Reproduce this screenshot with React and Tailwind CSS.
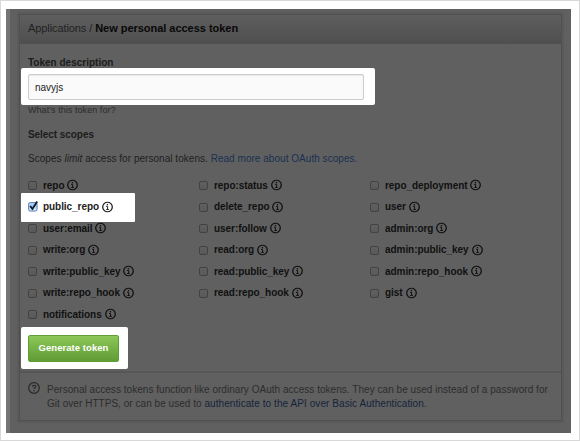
import React from "react";

const columns = [
  ["repo", "public_repo", "user:email", "write:org", "write:public_key", "write:repo_hook", "notifications"],
  ["repo:status", "delete_repo", "user:follow", "read:org", "read:public_key", "read:repo_hook"],
  ["repo_deployment", "user", "admin:org", "admin:public_key", "admin:repo_hook", "gist"],
];

function InfoIcon() {
  return (
    <svg className="ml-[3px] h-[11px] w-[11px] shrink-0 -translate-y-[0.5px]" viewBox="0 0 11 11" fill="none">
      <circle cx="5.5" cy="5.5" r="4.8" stroke="currentColor" strokeWidth="1.3" />
      <path d="M4.1 4.9h1.5v3M4.3 8h2.5" stroke="currentColor" strokeWidth="1" />
      <rect x="4.8" y="2.5" width="1.3" height="1.3" fill="currentColor" />
    </svg>
  );
}

function HelpIcon() {
  return (
    <svg className="mt-[-2px] h-3 w-3 shrink-0 text-[#292929]" viewBox="0 0 12 12" fill="none" stroke="currentColor">
      <circle cx="6" cy="6" r="5.3" strokeWidth="1.2" />
      <path d="M4.3 4.8C4.3 3.7 5 3.3 6 3.3s1.8.5 1.8 1.4C7.8 5.8 6 5.7 6 7.1" strokeWidth="1.15" />
      <path d="M6 8v1.3" strokeWidth="1.3" />
    </svg>
  );
}

function Checkbox({ checked }) {
  if (checked) {
    return (
      <svg className="h-[11px] w-[11px] shrink-0 overflow-visible" viewBox="0 0 11 11">
        <rect x="0.5" y="0.5" width="8.6" height="8.6" rx="1.7" fill="#a9cdf0" stroke="#6688b5" />
        <rect x="1.4" y="5.1" width="6.8" height="3.2" rx="1" fill="#c5e5fb" />
        <path d="M2.2 4L4.4 7L9.2 -0.4" fill="none" stroke="#10162b" strokeWidth="1.8" />
      </svg>
    );
  }
  return (
    <span className="flex h-[11px] w-[11px] shrink-0 items-center">
      <span className="h-[9px] w-[9px] rounded-[2px] border border-[#424242] bg-linear-to-b from-[#606060] to-[#595959]" />
    </span>
  );
}

function Scope({ name }) {
  const checked = name === "public_repo";
  return (
    <label
      className={
        checked
          ? "-ml-[7px] -my-[3.75px] flex h-[29px] w-[114px] items-center rounded-[1px] bg-white pl-[7px] text-[#222]"
          : "flex h-[21.5px] items-center text-[#111]"
      }
    >
      <Checkbox checked={checked} />
      <span className="ml-[4px] text-[10px] leading-3 font-bold tracking-[-0.06px]">{name}</span>
      <InfoIcon />
    </label>
  );
}

export default function App() {
  return (
    <div className="h-[441px] w-[580px] border border-[#d8d8d8] bg-white pt-2 pl-[5px] font-['Liberation_Sans',Arial,sans-serif]">
      <div className="h-[424px] w-[565px] border-l-4 border-[#747474] bg-[#606060] pt-[3px] pl-[7px]">
        <div className="h-[411px] w-[547px] rounded-[2px] border-2 border-[#5a5a5a]">
          <div className="flex h-[407px] flex-col border border-[#505050]">
            <header className="flex h-[29px] shrink-0 items-center bg-linear-to-b from-[#5e5e5e] to-[#4f4f4f] pb-[2px] pl-2 text-[11px] text-[#222]">
              <span className="tracking-[-0.09px]">Applications /&nbsp;</span>
              <strong className="tracking-[-0.03px] text-[#080808]">New personal access token</strong>
            </header>
            <main className="h-[327px] shrink-0 pl-2">
              <h2 className="pt-[13px] text-[10px] leading-[11px] font-bold text-[#1c1c1c]">Token description</h2>
              <div className="-ml-[7px] flex h-[37px] w-[354px] items-center rounded-[2px] bg-white pl-[7px]">
                <div className="h-[26px] w-[336px] rounded-[2px] border border-[#ccc] bg-[#fafafa] pt-px pl-1.5 text-[10px] leading-[24px] text-[#222] shadow-[inset_0_1px_1px_#e8e8e8]">navyjs</div>
              </div>
              <p className="text-[9px] leading-[10px] tracking-[0.06px] text-[#2c2c2c]">What's this token for?</p>
              <h2 className="mt-[14px] text-[10px] leading-3 font-bold tracking-[-0.06px] text-[#1c1c1c]">Select scopes</h2>
              <p className="mt-[12px] text-[10px] leading-3 tracking-[0.035px] text-[#202020]">
                Scopes <em>limit</em> access for personal tokens.{" "}
                <a className="text-[#1a3150]">Read more about OAuth scopes.</a>
              </p>
              <div className="mt-[10px] grid grid-cols-[171px_171px_171px]">
                {columns.map((names, i) => (
                  <div key={i}>
                    {names.map((name) => <Scope key={name} name={name} />)}
                  </div>
                ))}
              </div>
              <div className="mt-px -ml-[7px] flex h-[42px] w-[107px] items-center rounded-[2px] bg-white pt-px pl-[7px]">
                <button className="h-[27px] w-[91px] rounded-[2px] border border-[#5f9f35] bg-linear-to-b from-[#8bc858] to-[#609b34] text-[9.5px] font-bold tracking-[0.05px] text-white">Generate token</button>
              </div>
            </main>
            <footer className="flex grow border-t-2 border-[#565656] pt-[11px] pl-2">
              <HelpIcon />
              <p className="ml-[7px] text-[10px] leading-[13.5px] tracking-[0.038px] whitespace-nowrap text-[#2d2d2d]">
                <span className="-mt-px block">Personal access tokens function like ordinary OAuth access tokens. They can be used instead of a password for</span>
                Git over HTTPS, or can be used to <a className="tracking-[0.075px] text-[#15243a]">authenticate to the API over Basic Authentication</a>.
              </p>
            </footer>
          </div>
        </div>
      </div>
    </div>
  );
}
